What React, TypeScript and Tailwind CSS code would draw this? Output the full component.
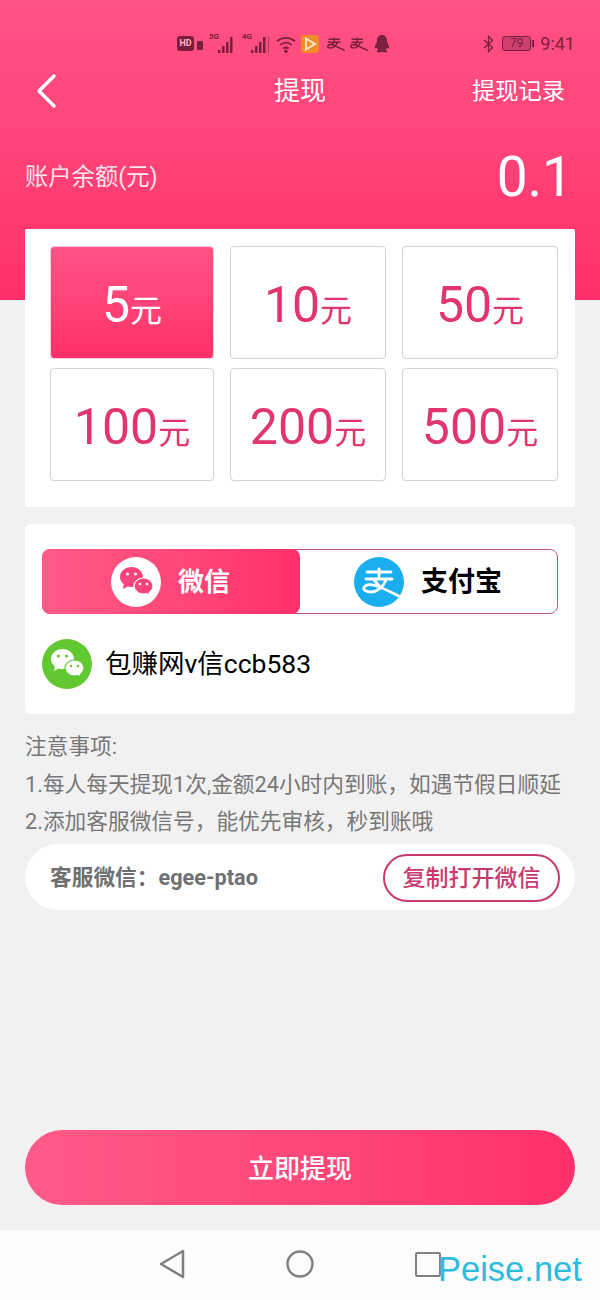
const FONT = "font-['Roboto','Noto_Sans_CJK_SC',sans-serif]";

function Bubbles({ color, dot }: { color: string; dot: string }) {
  return (
    <svg viewBox="0 0 50 50" className="w-full h-full">
      <path d="M20.500 10c-6.400 0-11.500 4.500-11.500 10 0 3 1.500 5.500 3.800 7.300L12 32l4.700-2.400c1.200.3 2.500.5 3.800.5 6.400 0 11.500-4.500 11.500-10S26.900 10 20.500 10z" fill={color} />
      <circle cx="16.500" cy="17" r="1.600" fill={dot} />
      <circle cx="24.500" cy="17" r="1.600" fill={dot} />
      <path d="M32.500 21c-5.200 0-9.500 3.600-9.500 8s4.300 8 9.500 8c1.100 0 2.100-.2 3.100-.5l3.400 1.900-.8-3c2.200-1.500 3.800-3.800 3.800-6.400 0-4.400-4.300-8-9.500-8z" fill={color} stroke={dot} strokeWidth="1.200" />
      <circle cx="29" cy="27" r="1.300" fill={dot} />
      <circle cx="36" cy="27" r="1.300" fill={dot} />
    </svg>
  );
}

// alipay mark, also used small in the status bar
function AlipayMark({ color, width }: { color: string; width: number }) {
  return (
    <svg viewBox="6 8 44 36" className="w-full h-full" fill="none" stroke={color} strokeWidth={width} strokeLinecap="round">
      <path d="M13 15h24M12 22h26M25 12v10M32 23c-3 7-9 12-15 12-5 0-8-2-7-4.500 1-3 6-3.500 11-2 9 2.500 18 8 27 12M20 23l7 8" />
    </svg>
  );
}

function Signal({ label, tail }: { label: string; tail?: boolean }) {
  return (
    <div className="relative w-[30px] h-[22px]">
      <span className="absolute left-0 -top-[1px] text-[8px] leading-[9px] font-bold text-[#7a1f3e]">{label}</span>
      <svg viewBox="0 0 30 22" className="w-full h-full">
        <path d="M9 17h2.500v3H9zM13 13h2.500v7H13zM17 9h2.500v11H17zM21 4h2.500v16H21z" fill="#7a1f3e" />
        {tail && <path d="M26 3h1v17h-1z" fill="#a83a5c" />}
      </svg>
    </div>
  );
}

function StatusBar() {
  return (
    <div className="h-[35px] mt-[26px] pl-[177px] pr-[25px] flex items-center text-[#7a1f3e]">
      <div className="flex items-center">
        <span className="w-[17px] h-[15px] rounded-[3px] bg-[#7a1f3e] text-[#ffb3c8] text-[9px] leading-[15px] font-bold text-center">HD</span>
        <span className="w-[6px] h-[9px] rounded-[1px] bg-[#7a1f3e] mt-[4px] ml-[3px] mr-[6px]" />
        <Signal label="5G" />
        <span className="w-[3px]" />
        <Signal label="4G" tail />
        <svg viewBox="0 0 24 20" className="w-[22px] h-[18px] ml-[3px]" fill="none" stroke="#7a1f3e" strokeWidth="2">
          <path d="M2 7c6-5 14-5 20 0M5.500 11c4-3.200 9-3.200 13 0M9 15c2-1.500 4-1.500 6 0" />
          <circle cx="12" cy="18" r="1" fill="#7a1f3e" />
        </svg>
        <svg viewBox="0 0 18 18" className="w-[18px] h-[18px] ml-[4px]">
          <rect width="18" height="18" rx="3" fill="#f08a2c" />
          <path d="M5 3.500 14 9l-9 5.500z" fill="none" stroke="#ffe9b8" strokeWidth="2" />
        </svg>
        <div className="w-[19px] h-[16px] ml-[7px]"><AlipayMark color="#7a1f3e" width={3.500} /></div>
        <div className="w-[19px] h-[16px] ml-[4px]"><AlipayMark color="#7a1f3e" width={3.500} /></div>
        <svg viewBox="0 0 16 18" className="w-[16px] h-[18px] ml-[6px]" fill="#7a1f3e">
          <path d="M8 0C4.700 0 3 2.500 3 5.500c0 1.500-.5 2.300-1.200 3.700C.8 11 .6 13 1.300 13.500c.5.300 1-.2 1.500-1 .3 1 .8 1.800 1.500 2.400-1.200.5-1.800 1.100-1.600 1.800.2.800 2 1 3.300.6.700-.2 1.300-.3 2-.3s1.300.1 2 .3c1.300.4 3.100.2 3.300-.6.200-.7-.4-1.300-1.600-1.800.7-.6 1.200-1.400 1.500-2.400.5.800 1 1.300 1.500 1 .7-.5.500-2.500-.5-4.300C14 7.800 13 7 13 5.500 13 2.500 11.300 0 8 0z" />
        </svg>
      </div>
      <div className="ml-auto flex items-center">
        <svg viewBox="0 0 12 20" className="w-[11px] h-[18px] mr-[8px]" fill="none" stroke="#7a1f3e" strokeWidth="1.500">
          <path d="M1 5.500 10.500 14 6 18.500v-17L10.500 6 1 14.500" />
        </svg>
        <div className="w-[29px] h-[15px] border border-[#7a1f3e] rounded-[3px] bg-[#d0406e] text-[12px] leading-[13px] text-center">79</div>
        <span className="w-[2px] h-[7px] bg-[#7a1f3e] ml-[1px] mr-[6px]" />
        <span className="text-[18px] leading-none">9:41</span>
      </div>
    </div>
  );
}

function Amount({ value, active, wide }: { value: string; active?: boolean; wide?: boolean }) {
  return (
    <div
      className={
        "h-[113px] rounded-[4px] flex items-baseline justify-center pt-[29px] " +
        (wide ? "w-[164px] " : "w-[156px] ") +
        (active
          ? "bg-gradient-to-b from-[#ff5285] to-[#ff2f6a] text-white border border-[#f0d0da]"
          : "bg-white border border-[#d2d2d2] text-[#e0356f]")
      }
    >
      <span className="text-[50px] leading-[58px]">{value}</span>
      <span className="text-[32px] leading-[58px]">元</span>
    </div>
  );
}

export default function App() {
  return (
    <div className={"w-[600px] h-[1300px] flex flex-col bg-[#f1f1f1] overflow-hidden " + FONT}>
      <header className="h-[300px] shrink-0 bg-gradient-to-b from-[#ff5285] to-[#ff2f6a]">
        <StatusBar />
        <div className="h-[60px] pl-[35px] pr-[35px] grid grid-cols-3 items-center text-white">
          <svg viewBox="0 0 24 36" className="w-[24px] h-[36px]" fill="none" stroke="white" strokeWidth="3.500" strokeLinecap="round" strokeLinejoin="round">
            <path d="M19 3 4 18l15 15" />
          </svg>
          <span className="text-[26px] text-center">提现</span>
          <span className="text-[23.250px] text-right whitespace-nowrap">提现记录</span>
        </div>
        <div className="mt-[26px] pl-[25px] pr-[27px] flex items-center justify-between text-white">
          <span className="text-[23.300px] text-[#ffe3eb]">账户余额(元)</span>
          <span className="text-[55px] leading-[60px]">0.1</span>
        </div>
      </header>

      <main className="flex-1 -mt-[71px] px-[25px] flex flex-col">
        <section className="h-[278px] bg-white rounded-[2px] pt-[17px] pl-[25px] pr-[17px] flex flex-col gap-[9px]">
          <div className="flex justify-between">
            <Amount value="5" active wide />
            <Amount value="10" />
            <Amount value="50" />
          </div>
          <div className="flex justify-between">
            <Amount value="100" wide />
            <Amount value="200" />
            <Amount value="500" />
          </div>
        </section>

        <section className="mt-[17px] h-[190px] bg-white rounded-[6px] pt-[25px] px-[17px]">
          <div className="h-[65px] border border-[#b8587f] rounded-[8px] flex">
            <div className="w-[258px] -m-[1px] rounded-[8px] bg-gradient-to-r from-[#ff5a88] to-[#ff2f6a] flex items-center pl-[69px]">
              <div className="w-[50px] h-[50px] rounded-full bg-white">
                <Bubbles color="#f7447c" dot="#ffffff" />
              </div>
              <span className="ml-[17px] pt-[2px] text-[26px] font-bold text-white">微信</span>
            </div>
            <div className="flex-1 flex items-center pl-[55px]">
              <div className="w-[50px] h-[50px] rounded-full bg-[#1aaeef] overflow-hidden">
                <svg viewBox="0 0 50 50" className="w-full h-full" fill="none" stroke="white" strokeWidth="2.800" strokeLinecap="round">
                  <path d="M13 15h24M12 22h26M25 12v10M32 23c-3 7-9 12-15 12-5 0-8-2-7-4.500 1-3 6-3.500 11-2 9 2.500 18 8 31 14M20 23l7 8" />
                </svg>
              </div>
              <span className="ml-[17px] pt-[2px] text-[27px] font-bold text-black">支付宝</span>
            </div>
          </div>
          <div className="mt-[25px] flex items-center">
            <div className="w-[50px] h-[50px] rounded-full bg-[#62c832]">
              <Bubbles color="#ffffff" dot="#62c832" />
            </div>
            <span className="ml-[13px] text-[26.500px] text-black">包赚网v信ccb583</span>
          </div>
        </section>

        <div className="mt-[14px] text-[21.700px] leading-[37.500px] text-[#777777] whitespace-nowrap">
          <p>注意事项:</p>
          <p>1.每人每天提现1次,金额24小时内到账，如遇节假日顺延</p>
          <p>2.添加客服微信号，能优先审核，秒到账哦</p>
        </div>

        <div className="mt-[3px] h-[66px] rounded-full bg-white flex items-center justify-between pl-[25px] pr-[15px] pt-[2px]">
          <span className="text-[21.700px] font-bold text-[#707070] pt-[2px]">客服微信：egee-ptao</span>
          <span className="w-[177px] h-[48px] rounded-full border-2 border-[#c8396f] text-[#c8396f] text-[23px] font-medium leading-[46px] text-center">复制打开微信</span>
        </div>

        <button className="mt-auto mb-[25px] h-[75px] pt-[3px] rounded-full bg-gradient-to-r from-[#ff5a88] to-[#ff2f6a] text-white text-[26px] font-medium">
          立即提现
        </button>
      </main>

      <footer className="relative h-[70px] shrink-0 bg-[#fcfcfc] flex items-center pl-[159px] gap-[101px] pb-[2px]">
        <svg viewBox="0 0 26 30" className="w-[26px] h-[30px]" fill="none" stroke="#808080" strokeWidth="2.500" strokeLinejoin="round">
          <path d="M24 2v26L2 15z" />
        </svg>
        <svg viewBox="0 0 28 28" className="w-[28px] h-[28px]" fill="none" stroke="#808080" strokeWidth="2.500">
          <circle cx="14" cy="14" r="12.500" />
        </svg>
        <div className="w-[26px] h-[25px] rounded-[2px] border-[2.500px] border-[#808080]" />
        <span className="absolute left-[438px] top-[17px] text-[34.500px] leading-[44px] font-['Liberation_Sans',sans-serif] text-[#2ebbdc]">Peise.net</span>
      </footer>
    </div>
  );
}
